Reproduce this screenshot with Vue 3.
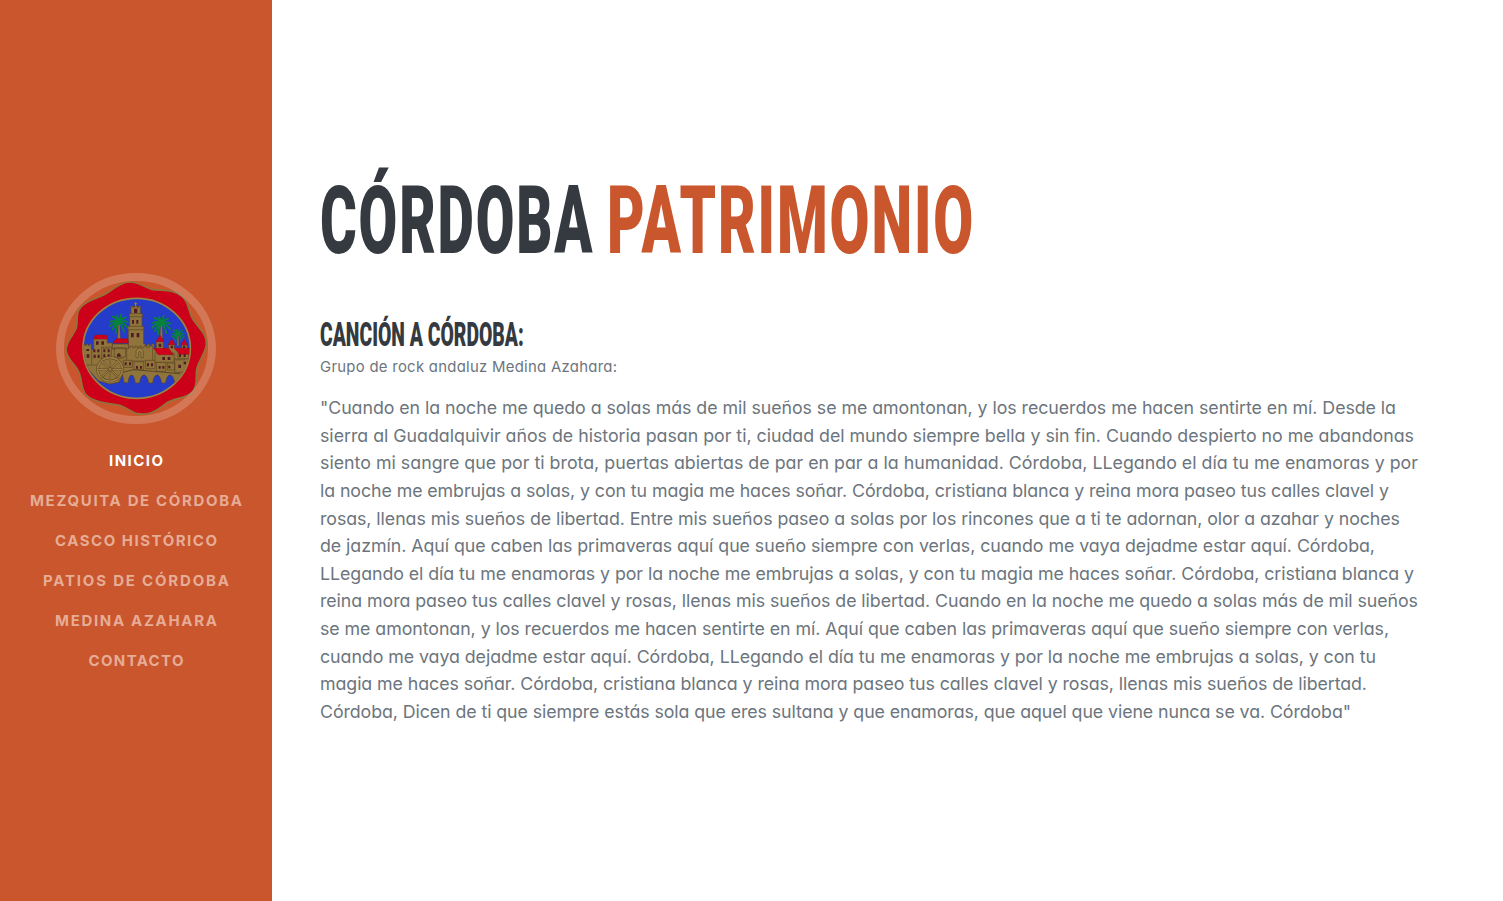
<script setup>
import { nextTick } from 'vue'

const links = [
  { label: 'Inicio', width: 54, active: true },
  { label: 'Mezquita de Córdoba', width: 212 },
  { label: 'Casco Histórico', width: 162 },
  { label: 'Patios de Córdoba', width: 186 },
  { label: 'Medina Azahara', width: 162 },
  { label: 'Contacto', width: 95 },
]

const verses = [
  ['"Cuando en la noche me quedo a solas más de mil sueños se me amontonan, y los recuerdos me hacen sentirte en mí. Desde la', 1076],
  ['sierra al Guadalquivir años de historia pasan por ti, ciudad del mundo siempre bella y sin fin. Cuando despierto no me abandonas', 1094],
  ['siento mi sangre que por ti brota, puertas abiertas de par en par a la humanidad. Córdoba, LLegando el día tu me enamoras y por', 1098],
  ['la noche me embrujas a solas, y con tu magia me haces soñar. Córdoba, cristiana blanca y reina mora paseo tus calles clavel y', 1069],
  ['rosas, llenas mis sueños de libertad. Entre mis sueños paseo a solas por los rincones que a ti te adornan, olor a azahar y noches', 1080],
  ['de jazmín. Aquí que caben las primaveras aquí que sueño siempre con verlas, cuando me vaya dejadme estar aquí. Córdoba,', 1055],
  ['LLegando el día tu me enamoras y por la noche me embrujas a solas, y con tu magia me haces soñar. Córdoba, cristiana blanca y', 1094],
  ['reina mora paseo tus calles clavel y rosas, llenas mis sueños de libertad. Cuando en la noche me quedo a solas más de mil sueños', 1098],
  ['se me amontonan, y los recuerdos me hacen sentirte en mí. Aquí que caben las primaveras aquí que sueño siempre con verlas,', 1069],
  ['cuando me vaya dejadme estar aquí. Córdoba, LLegando el día tu me enamoras y por la noche me embrujas a solas, y con tu', 1056],
  ['magia me haces soñar. Córdoba, cristiana blanca y reina mora paseo tus calles clavel y rosas, llenas mis sueños de libertad.', 1047],
  ['Córdoba, Dicen de ti que siempre estás sola que eres sultana y que enamoras, que aquel que viene nunca se va. Córdoba"', 1031],
]

// Spreads the letters of an element until its text has the given width.
const vFit = {
  async mounted(el, { value }) {
    await nextTick()
    const gaps = el.textContent.length - 1
    const natural = el.getBoundingClientRect().width
    el.style.letterSpacing = `${(value - natural) / gaps}px`
    el.style.marginRight = `${-(value - natural) / gaps}px`
  },
}

// Condenses an element horizontally to the given width.
const vCondense = {
  async mounted(el, { value }) {
    await nextTick()
    el.style.transform = `scaleX(${value / el.offsetWidth})`
  },
}
</script>

<template>
  <div class="page">
    <aside class="sidebar">
      <svg class="crest" viewBox="18 24 480 453" preserveAspectRatio="none">
        <defs>
          <clipPath id="disc"><ellipse cx="260" cy="250" rx="159" ry="148" /></clipPath>
          <g id="palm">
            <path d="M-2 2 L-4 48 H4 L2 2Z" fill="#8f743c" stroke="#5d4524" stroke-width="1" />
            <path d="M0 0 Q-6-16-20-19 M0 0 Q-12-10-26-4 M0 0 Q-16-4-27 10 M0 0 Q-12 2-19 20 M0 0 Q-8 8-10 30 M0 0 Q4-16 7-26 M0 0 Q8-14 20-17 M0 0 Q14-10 26-2 M0 0 Q14-3 26 14 M0 0 Q10 4 15 26 M0 0 Q-2-12-6-22" fill="none" stroke="#07823a" stroke-width="5.500" stroke-linecap="round" />
          </g>
        </defs>
        <path d="M242 51 C265 51 280 65 306 73 C338 78 370 72 395 93 C420 111 413 146 433 169 C449 192 472 209 469 240 C464 266 449 285 442 306 C434 329 446 356 429 380 C405 404 372 396 344 418 C316 440 296 452 263 446 C242 442 226 423 205 420 C169 415 127 411 106 387 C91 365 97 337 83 314 C70 291 48 280 48 252 C52 222 75 207 80 184 C83 160 77 142 94 125 C118 101 151 100 178 80 C198 66 215 51 242 51Z" fill="#cc0018" stroke="#8f743c" stroke-width="5" />
        <ellipse cx="260" cy="250" rx="161" ry="150" fill="#253bc9" stroke="#9b8342" stroke-width="5" />
        <g clip-path="url(#disc)">
          <use href="#palm" x="207" y="174" />
          <use href="#palm" x="334" y="178" />
          <use href="#palm" transform="translate(384 209) scale(.7)" />
          <g fill="#8f743c" stroke="#5d4524" stroke-width="2">
            <path d="M99 248 V237 H104 V241 H109 V237 H114 V241 H119 V237 H124 V254 H131 V221 H172 V234 H187 V252 H235 V186 H239 V146 H243 V123 H248 V127 H253 V123 H261 V127 H266 V123 H271 V147 H276 V186 H281 V237 H286 V242 H292 V237 H298 V242 H304 V237 H312 V251 H319 V229 H340 V250 H356 V237 H373 V249 H395 V237 H411 V252 H427 V325 L382 354 L374 354 C370 322 350 322 347 354 L335 354 C330 322 312 322 308 354 L296 354 C291 322 272 322 269 354 L256 354 C252 322 237 322 234 354 L222 352 L218 330 L206 352 L180 357 L145 347 L104 301Z" />
            <path d="M238 146 H277 V155 H238Z M234 184 H281 V194 H234Z M230 243 H235 V248 H241 V243 H248 V248 H255 V243 H261 V248 H267 V243 H274 V248 H282 V243 H290 V248 H298 V243 H308 V288 H230Z" />
            <path d="M187 237 H235 V251 H187Z M155 246 H160 V250 H165 V246 H170 V250 H175 V246 H184 V281 H155Z M193 248 H227 V276 H193Z" />
            <path d="M220 286 H247 V307 H220Z M252 290 H281 V314 H252Z M287 286 H315 V311 H287Z M319 292 H347 V319 H319Z M352 294 H374 V315 H352Z M374 281 H378 V285 H383 V281 H387 V285 H392 V281 H398 V285 H404 V281 H414 V322 H374Z" />
            <path d="M315 264 H372 V292 H315Z M384 264 H416 V281 H384Z" />
            <path d="M218 322 L250 314 L310 319 L390 326" fill="none" stroke-width="3" />
            <path d="M99 300 H150 M125 254 V299 M152 280 H220" fill="none" />
            <path d="M258 278 V260 C260 246 278 246 280 262 V278 H273 V263 C270 256 266 258 265 263 V278Z" fill="#9b8342" />
          </g>
          <g fill="#d1001a" stroke="#8f1420" stroke-width="1.5">
            <path d="M135 210 H169 L173 222 H131Z M198 221 H232 L236 234 H189Z M330 211 L342 230 H318Z M365 221 L375 239 H354Z M403 223 L412 240 H393Z M311 250 H356 L370 269 H325Z M373 250 H418 V268 H389Z" />
          </g>
          <g fill="#4f1c22">
            <path d="M252 131 h10 v13 h-10Z M246 165 h6 v11 h-6Z M259 165 h6 v11 h-6Z M243 204 h8 v13 h-8Z M260 204 h8 v13 h-8Z" />
            <path d="M138 229 h8 v10 h-8Z M154 229 h8 v10 h-8Z M109 252 h8 v6 h-8Z M110 268 h8 v10 h-8Z M130 253 h6 v9 h-6Z M142 253 h6 v9 h-6Z M131 269 h6 v10 h-6Z M143 269 h6 v10 h-6Z M160 253 h6 v9 h-6Z M173 253 h6 v9 h-6Z M160 268 h6 v9 h-6Z M173 268 h6 v9 h-6Z M201 275 v-6 q6-8 11 0 v6Z" />
            <path d="M224 292 h6 v9 h-6Z M237 292 h6 v9 h-6Z M258 303 h6 v8 h-6Z M270 303 h6 v8 h-6Z M291 295 h6 v9 h-6Z M303 295 h6 v9 h-6Z M326 303 h6 v8 h-6Z M337 303 h6 v8 h-6Z M355 302 h6 v8 h-6Z M326 236 h8 v10 h-8Z M362 242 h7 v8 h-7Z M399 242 h7 v7 h-7Z M337 276 h8 v9 h-8Z M353 276 h8 v9 h-8Z M387 267 h6 v9 h-6Z M401 267 h6 v9 h-6Z M385 299 h8 v10 h-8Z M401 290 h7 v8 h-7Z" />
          </g>
          <ellipse cx="180" cy="313" rx="37" ry="35" fill="#8f743c" stroke="#5d4524" stroke-width="8" />
          <g fill="none" stroke="#9c8145">
            <ellipse cx="180" cy="313" rx="37" ry="35" stroke-width="5" />
            <path d="M180 278 V348 M143 313 H217 M154 288 L206 338 M206 288 L154 338" stroke="#5d4524" stroke-width="6" />
            <path d="M180 278 V348 M143 313 H217 M154 288 L206 338 M206 288 L154 338" stroke-width="3.500" />
            <ellipse cx="180" cy="313" rx="6" ry="6" fill="#8f743c" stroke="#5d4524" stroke-width="2" />
          </g>
        </g>
        <path d="M257 112 V123 M253 116 H261" stroke="#9b8342" stroke-width="3" />
        <ellipse cx="258" cy="250.500" rx="228" ry="214.500" fill="none" stroke="#fff" stroke-opacity=".2" stroke-width="24" />
      </svg>
      <nav class="nav">
        <a v-for="link in links" :key="link.label" class="nav-link" :class="{ active: link.active }">
          <span v-fit="link.width" class="fit">{{ link.label }}</span>
        </a>
      </nav>
    </aside>
    <main class="content">
      <h1 class="title">
        <span class="box-first"><span v-condense="274" class="condensed">Córdoba</span></span>
        <span v-condense="368" class="condensed accent">Patrimonio</span>
      </h1>
      <h2 class="subtitle"><span v-condense="204" class="condensed">Canción a Córdoba:</span></h2>
      <p class="credit"><span v-fit="297" class="fit">Grupo de rock andaluz Medina Azahara:</span></p>
      <p class="lyrics">
        <span v-for="verse in verses" :key="verse[0]" class="verse"><span v-fit="verse[1]" class="fit">{{ verse[0] }}</span></span>
      </p>
    </main>
  </div>
</template>

<style>
body {
  margin: 0;
  background: #fff;
}
</style>

<style scoped>
.page {
  display: flex;
  height: 901px;
  overflow: hidden;
  font-family: Inter, "Open Sans", sans-serif;
  font-feature-settings: "cv11" 1;
  font-weight: 370;
  color: #6c757d;
}
.sidebar {
  box-sizing: border-box;
  flex: 0 0 272px;
  display: flex;
  flex-direction: column;
  align-items: center;
  padding-top: 273px;
  background: #c9562c;
}
.crest {
  display: block;
  width: 160px;
  height: 151px;
  margin-bottom: 16px;
}
.nav {
  display: flex;
  flex-direction: column;
  align-items: center;
}
.nav-link {
  height: 40px;
  line-height: 41px;
  font-size: 15px;
  font-weight: 750;
  text-transform: uppercase;
  color: #e6ac96;
}
.nav-link.active {
  color: #fff;
}
.fit {
  display: inline-block;
  white-space: pre;
}
.content {
  flex: 1;
  padding: 164px 48px 0;
}
.title,
.subtitle {
  margin: 0;
  font-family: Roboto, sans-serif;
  color: #343a40;
  text-transform: uppercase;
  white-space: nowrap;
}
.title {
  display: flex;
  height: 115px;
  margin-bottom: 37px;
  font-size: 94px;
  line-height: 115px;
  font-weight: 900;
  letter-spacing: 3px;
}
.box-first {
  width: 287px;
}
.condensed {
  display: inline-block;
  transform-origin: left center;
}
.accent {
  color: #c9562c;
}
.subtitle {
  height: 36px;
  font-size: 33px;
  line-height: 38px;
  font-weight: 900;
}
.credit {
  height: 24px;
  margin: 3px 0 14px;
  font-size: 14.900px;
  line-height: 24px;
}
.lyrics {
  margin: 0;
  padding-top: 1px;
  font-size: 17.800px;
  line-height: 27.650px;
}
.verse {
  display: block;
  height: 27.650px;
  white-space: nowrap;
}
</style>
